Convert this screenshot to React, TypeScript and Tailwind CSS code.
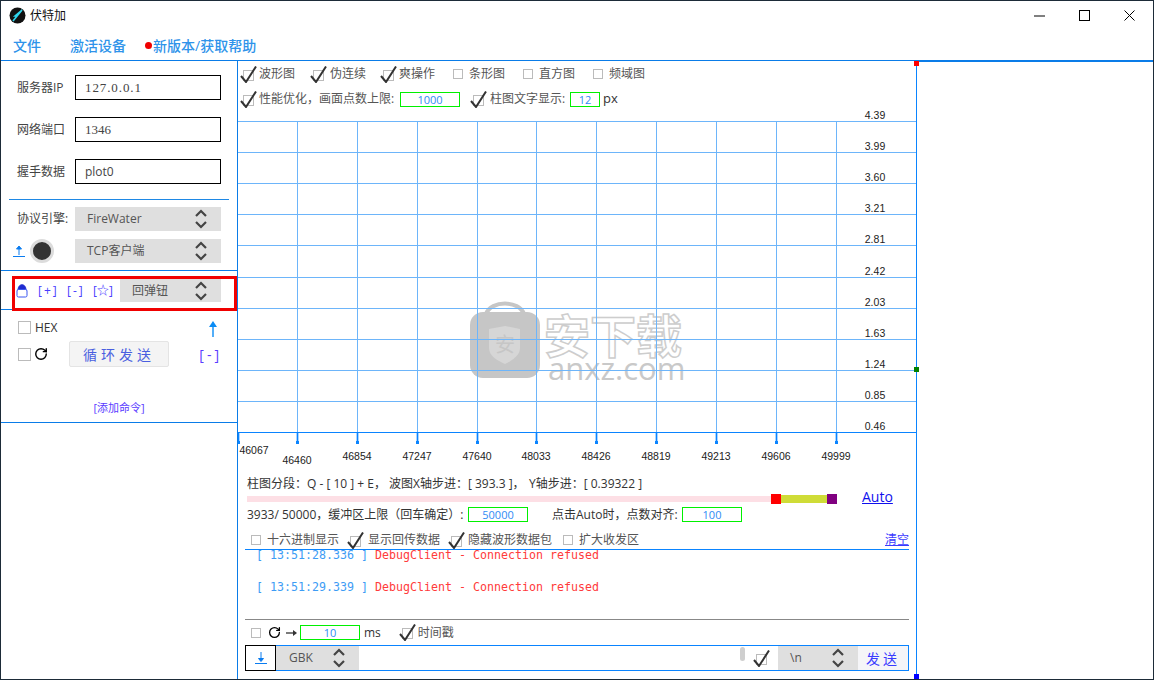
import { RotateCw } from "lucide-react"

const sans = "font-['Open_Sans','Noto_Sans_CJK_SC',sans-serif]"

const xTicks = [
  { x: 238, y: 454, t: "46067", lx: 254 },
  { x: 297, y: 464, t: "46460", lx: 297 },
  { x: 357, y: 460, t: "46854", lx: 357 },
  { x: 417, y: 460, t: "47247", lx: 417 },
  { x: 477, y: 460, t: "47640", lx: 477 },
  { x: 536, y: 460, t: "48033", lx: 536 },
  { x: 596, y: 460, t: "48426", lx: 596 },
  { x: 656, y: 460, t: "48819", lx: 656 },
  { x: 716, y: 460, t: "49213", lx: 716 },
  { x: 776, y: 460, t: "49606", lx: 776 },
  { x: 836, y: 460, t: "49999", lx: 836 },
]
const yTicks = [
  { y: 121, t: "4.39" },
  { y: 152, t: "3.99" },
  { y: 183, t: "3.60" },
  { y: 214, t: "3.21" },
  { y: 245, t: "2.81" },
  { y: 277, t: "2.42" },
  { y: 308, t: "2.03" },
  { y: 339, t: "1.63" },
  { y: 370, t: "1.24" },
  { y: 401, t: "0.85" },
  { y: 432, t: "0.46" },
]

function Chevrons() {
  return (
    <svg width="14" height="22" viewBox="0 0 14 22" fill="none" stroke="#444" strokeWidth="2.2">
      <path d="M2 8 L7 3 L12 8" />
      <path d="M2 14 L7 19 L12 14" />
    </svg>
  )
}

function Select({ label, w, pl = 12 }: { label: string; w: string; pl?: number }) {
  return (
    <div className={`${w} h-full bg-[#dfdfdf] flex items-center justify-between pr-[13px] text-[12px] text-[#555]`}>
      <span style={{ paddingLeft: pl }}>{label}</span>
      <Chevrons />
    </div>
  )
}

function Tick() {
  return (
    <svg width="18" height="17" viewBox="0 0 18 17" fill="none" className="shrink-0">
      <rect x="3.5" y="4.5" width="10" height="10" stroke="#bbb" />
      <path d="M1 10 L6 16 L16 0.5" stroke="#333" strokeWidth="2" />
    </svg>
  )
}

function Box({ size = "w-[10px] h-[10px]" }: { size?: string }) {
  return <div className={`${size} border border-[#bbb] bg-white shrink-0`} />
}

function UpArrow({ down = false }: { down?: boolean }) {
  return (
    <svg width="12" height="14" viewBox="0 0 12 14" fill="none" stroke="#0a7cf0" strokeWidth="1">
      {down ? <path d="M6 1 V9" /> : <path d="M6 3 V11" />}
      {down ? <path d="M3.5 7.5 L6 10.5 L8.5 7.5 Z" fill="#0a7cf0" /> : <path d="M3.5 5 L6 2 L8.5 5 Z" fill="#0a7cf0" />}
      <path d="M0 12.5 H12" />
    </svg>
  )
}

function GreenInput({ value, w }: { value: string; w: string }) {
  return (
    <div className={`${w} h-[15px] border border-[#00f000] flex items-center justify-center text-[11px] leading-none text-[#2f8bf5]`}>
      {value}
    </div>
  )
}

function Watermark() {
  return (
    <div className="absolute left-[231px] top-[190px] flex items-start">
      <svg width="72" height="82" viewBox="0 0 72 82" className="shrink-0">
        <path d="M17 16 C22 2 50 2 55 16" fill="none" stroke="#c6c6c6" strokeWidth="4" />
        <rect x="1" y="14" width="70" height="66" rx="13" fill="#c6c6c6" />
        <path d="M20 31 L36 28 L51 31 V50 C51 58 42 63 36 66 C29 63 20 58 20 50 Z" fill="#d6d6d6" />
        <text x="36" y="54" textAnchor="middle" fontSize="20" fill="#c6c6c6" fontFamily="Noto Sans CJK SC">安</text>
      </svg>
      <div className="ml-[3px] mt-[12px] flex flex-col">
        <span className="h-[46px] text-[46px] leading-[46px] font-bold text-white [-webkit-text-stroke:1.5px_#cdcdcd] font-['Noto_Sans_CJK_SC',sans-serif]">
          安下载
        </span>
        <span className="pl-[4px] h-[24px] text-[31px] leading-[24px] text-[#c9c9c9] font-['Open_Sans',sans-serif]">anxz.com</span>
      </div>
    </div>
  )
}

function Chart() {
  return (
    <div className="relative h-[362px] shrink-0">
      <Watermark />
      <svg width="678" height="362" viewBox="238 108 678 362" className="relative block">
        {yTicks.map((r) => (
          <line key={r.t} x1="238" x2="916" y1={r.y + 0.5} y2={r.y + 0.5} stroke={r.y === 432 ? "#0a84ff" : "#6db5fa"} />
        ))}
        {xTicks.slice(1).map((r) => (
          <line key={r.t} x1={r.x + 0.5} x2={r.x + 0.5} y1="121" y2="432" stroke="#6db5fa" />
        ))}
        {xTicks.map((r) => (
          <g key={r.t}>
            <line x1={r.x + 0.5} x2={r.x + 0.5} y1="433" y2="444" stroke="#0a84ff" strokeWidth="1.7" />
            <rect x={r.x - 1} y="441" width="3" height="3" fill="#0a84ff" />
            <text x={r.lx} y={r.y} textAnchor="middle" fontSize="10.5" fill="#222" fontFamily="Liberation Sans">
              {r.t}
            </text>
          </g>
        ))}
        {yTicks.map((r) => (
          <text key={r.t} x="875" y={r.y - 2} textAnchor="middle" fontSize="10.5" fill="#222" fontFamily="Liberation Sans">
            {r.t}
          </text>
        ))}
      </svg>
    </div>
  )
}

function Sidebar() {
  const fields = [
    { label: "服务器IP", value: "127.0.0.1", cls: "font-['Liberation_Serif',serif] text-[13px] tracking-[0.9px]" },
    { label: "网络端口", value: "1346", cls: "font-['Liberation_Serif',serif] text-[13px]" },
    { label: "握手数据", value: "plot0", cls: "" },
  ]
  return (
    <aside className="w-[237px] shrink-0 border-r border-[#0a7ce8] flex flex-col text-[12px] text-[#444]">
      <div className="pt-[14px] pl-4 flex flex-col gap-[17px]">
        {fields.map((f) => (
          <div key={f.label} className="flex items-center h-[25px]">
            <span className="w-[58px]">{f.label}</span>
            <div className={`w-[146px] h-full border border-black flex items-center pl-[9px] text-[#444] ${f.cls}`}>{f.value}</div>
          </div>
        ))}
      </div>
      <div className="mt-[15px] ml-2 w-[220px] h-px bg-[#1e88e5]" />
      <div className="mt-[7px] pl-4 flex flex-col gap-2">
        <div className="flex items-center h-6">
          <span className="w-[58px]">协议引擎:</span>
          <Select label="FireWater" w="w-[146px]" />
        </div>
        <div className="flex items-center h-6">
          <div className="w-[58px] flex items-center -ml-[4px] pr-0">
            <UpArrow />
            <div className="ml-[5px] w-[24px] h-[24px] rounded-full bg-[#333] border-[3px] border-[#dcdcdc]" />
          </div>
          <div className="ml-[4px]">
            <div className="h-6">
              <Select label="TCP客户端" w="w-[146px]" />
            </div>
          </div>
        </div>
      </div>
      <div className="mt-[7px] h-px bg-[#0a7ce8]" />
      <div className="relative mt-[5px] ml-[11px] w-[225px] h-[35px] border-[3px] border-[#f00000] flex items-start">
        <div className="absolute -left-[14px] top-[30px] w-[11px] h-px bg-[#0a7ce8]" />
        <div className="h-[23px] flex items-center text-[12px] text-[#4a3cff] w-full">
          <svg width="12" height="15" viewBox="0 0 12 15" className="ml-[1px] shrink-0">
            <path d="M2 7 C2 0 10 0 10 7 Z" fill="#1f2bd0" stroke="#1f2bd0" />
            <rect x="1" y="6.5" width="10" height="7.5" rx="1.5" fill="#fff" stroke="#3b57f0" />
          </svg>
          <span className="ml-[10px] w-[29px] tracking-[2px]">[+]</span>
          <span className="w-[26px] tracking-[2px]">[-]</span>
          <span className="w-[27px]">[☆]</span>
          <Select label="回弹钮" w="w-[101px]" />
        </div>
      </div>
      <div className="mt-[10px] pl-[17px] pr-[19px] flex items-center h-[13px] justify-between">
        <div className="flex items-center gap-[4px]">
          <Box size="w-[13px] h-[13px]" />
          <span className="text-[#333]">HEX</span>
        </div>
        <svg width="10" height="17" viewBox="0 0 10 17" className="mt-[2px]">
          <path d="M5 4 V17" stroke="#0a8cf5" strokeWidth="1.4" />
          <path d="M1 7 L5 1 L9 7 Z" fill="#0a8cf5" />
        </svg>
      </div>
      <div className="mt-[7px] pl-[17px] pr-[15px] flex items-center h-[26px]">
        <Box size="w-[13px] h-[13px]" />
        <RotateCw size={14} strokeWidth={2.4} color="#000" className="ml-[3px]" />
        <div className="ml-[21px] w-[100px] h-[26px] bg-[#f4f4f4] border border-[#e4e4e4] rounded-[2px] flex items-center justify-center text-[14px] tracking-[4px] text-[#4a5fe0]">
          循环发送
        </div>
        <span className="ml-auto text-[14px] tracking-[3px] text-[#5a3cff]">[-]</span>
      </div>
      <div className="mt-[33px] h-[15px] text-center text-[11px] leading-[15px] text-[#5a3cff]">[添加命令]</div>
      <div className="mt-[7px] h-px bg-[#0a7ce8]" />
    </aside>
  )
}

function ChartOptions() {
  return (
    <div className="h-[47px] shrink-0 pt-[5px] pl-[2px] text-[12px] text-[#555]">
      <div className="flex items-center h-4">
        <Tick />
        <span className="ml-[1px] w-[51px]">波形图</span>
        <Tick />
        <span className="ml-[2px] w-[50px]">伪连续</span>
        <Tick />
        <span className="ml-[1px] w-[54px]">爽操作</span>
        <Box />
        <span className="ml-[6px] w-[54px]">条形图</span>
        <Box />
        <span className="ml-[6px] w-[54px]">直方图</span>
        <Box />
        <span className="ml-[6px]">频域图</span>
      </div>
      <div className="mt-[9px] flex items-center h-4">
        <Tick />
        <span className="ml-[1px] w-[141px] whitespace-nowrap">性能优化，画面点数上限:</span>
        <GreenInput value="1000" w="w-[60px]" />
        <div className="ml-[10px]">
          <Tick />
        </div>
        <span className="ml-[2px] w-[80px] whitespace-nowrap">柱图文字显示:</span>
        <GreenInput value="12" w="w-[30px]" />
        <span className="ml-[3px] text-[13px] text-[#333]">px</span>
      </div>
    </div>
  )
}

function SliderPanel() {
  return (
    <div className="pl-[9px] text-[12px] text-[#333]">
      <div className="mt-[6px] h-4 leading-4 whitespace-nowrap flex">
        <span className="w-[142px]">柱图分段：Q - [ 10 ] + E，</span>
        <span className="w-[140px]">波图X轴步进：[ 393.3 ]，</span>
        <span>Y轴步进：[ 0.39322 ]</span>
      </div>
      <div className="mt-[2px] h-[10px] flex items-center">
        <div className="w-[524px] h-[6px] bg-[#fddfe5]" />
        <div className="w-[10px] h-[10px] bg-[#ff0000]" />
        <div className="w-[46px] h-2 bg-[#cfdc37]" />
        <div className="w-[10px] h-[10px] bg-[#800080]" />
        <a className="ml-[25px] -mt-[4px] text-[14px] leading-[20px] underline text-[#1010ee]">Auto</a>
      </div>
      <div className="mt-[3px] h-[15px] flex items-center">
        <span className="w-[221px] whitespace-nowrap">3933/ 50000，缓冲区上限（回车确定）:</span>
        <GreenInput value="50000" w="w-[60px]" />
        <span className="ml-[24px] w-[130px] whitespace-nowrap">点击Auto时，点数对齐:</span>
        <GreenInput value="100" w="w-[60px]" />
      </div>
    </div>
  )
}

function LogPanel() {
  return (
    <div className="ml-[7px] w-[664px] flex flex-col text-[12px] text-[#555]">
      <div className="mt-[10px] h-4 flex items-center pl-[6px]">
        <Box />
        <span className="ml-[6px] w-[81px] whitespace-nowrap">十六进制显示</span>
        <div className="-ml-[1px]">
          <Tick />
        </div>
        <span className="ml-[3px] w-[80px] whitespace-nowrap">显示回传数据</span>
        <Tick />
        <span className="ml-[2px] w-[95px] whitespace-nowrap">隐藏波形数据包</span>
        <Box />
        <span className="ml-[6px] whitespace-nowrap">扩大收发区</span>
        <a className="ml-auto underline text-[#3b3bff]">清空</a>
      </div>
      <div className="mt-px h-px bg-[#0a84ff]" />
      <div className="h-[69px] overflow-hidden pl-[11px] text-[11.63px] font-['DejaVu_Sans_Mono',monospace] leading-4">
        <div className="-mt-[3px] whitespace-pre">
          <span className="text-[#3d9cf5]">[ 13:51:28.336 ] </span>
          <span className="text-[#ff3b3b]">DebugClient - Connection refused</span>
        </div>
        <div className="mt-4 whitespace-pre">
          <span className="text-[#3d9cf5]">[ 13:51:29.339 ] </span>
          <span className="text-[#ff3b3b]">DebugClient - Connection refused</span>
        </div>
      </div>
      <div className="h-px bg-[#888]" />
      <div className="h-[25px] flex items-center pl-[6px]">
        <Box />
        <RotateCw size={13} strokeWidth={2.4} color="#000" className="ml-[7px]" />
        <svg width="11" height="8" viewBox="0 0 11 8" className="ml-[5px] mr-[3px]">
          <path d="M0 4 H8" stroke="#333" strokeWidth="1.3" />
          <path d="M7 1 L11 4 L7 7 Z" fill="#333" />
        </svg>
        <GreenInput value="10" w="w-[60px]" />
        <span className="ml-[4px] text-[#333]">ms</span>
        <div className="ml-[18px]">
          <Tick />
        </div>
        <span className="ml-[1px]">时间戳</span>
      </div>
      <div className="h-[26px] border border-[#0a84ff] flex items-stretch">
        <div className="-ml-px -mt-px h-[26px] w-[31px] border border-black flex items-center justify-center">
          <UpArrow down />
        </div>
        <Select label="GBK" w="w-[83px]" pl={13} />
        <div className="flex-1 flex items-center justify-end pr-[7px]">
          <div className="w-[5px] h-[14px] mb-[9px] rounded-full bg-[#cfcfcf]" />
          <div className="ml-[8px]">
            <Tick />
          </div>
        </div>
        <Select label="\n" w="w-[80px]" pl={12} />
        <div className="w-[50px] bg-[#f5f5f8] flex items-center justify-center text-[14px] tracking-[3px] text-[#3a3cff]">发送</div>
      </div>
    </div>
  )
}

export default function App() {
  return (
    <div className={`relative w-[1154px] h-[680px] bg-white border-t border-l border-r border-b border-[#1d2b38] flex flex-col overflow-hidden ${sans}`}>
      <div className="h-[29px] shrink-0 flex items-center pl-[8px]">
        <svg width="17" height="17" viewBox="0 0 17 17">
          <circle cx="8.5" cy="8.5" r="8" fill="#111" />
          <path d="M13 3 L4 14 L8 9 L6 9 Z" stroke="#2fd6ee" strokeWidth="1.6" fill="none" />
        </svg>
        <span className="ml-[4px] text-[12px] text-[#111]">伏特加</span>
        <div className="ml-auto flex items-center">
          <svg width="11" height="2" viewBox="0 0 11 2" className="mr-[34px]">
            <path d="M0 1 H11" stroke="#000" strokeWidth="1" />
          </svg>
          <div className="w-[11px] h-[11px] border border-black mr-[34px]" />
          <svg width="11" height="11" viewBox="0 0 11 11" className="mr-[18px]">
            <path d="M0.5 0.5 L10.5 10.5 M10.5 0.5 L0.5 10.5" stroke="#000" strokeWidth="1" />
          </svg>
        </div>
      </div>
      <nav className="h-[31px] shrink-0 border-b border-[#0a7ce8] flex items-center pl-[12px] text-[14px] font-medium text-[#2e93ea]">
        <span className="w-[57px]">文件</span>
        <span className="w-[75px]">激活设备</span>
        <span className="w-[7px] h-[7px] rounded-full bg-[#f00000]" />
        <span className="ml-[1px]">新版本/获取帮助</span>
      </nav>
      <main className="flex-1 flex min-h-0">
        <Sidebar />
        <section className="relative w-[679px] shrink-0 border-r border-[#0a84ff] flex flex-col">
          <ChartOptions />
          <Chart />
          <SliderPanel />
          <LogPanel />
          <div className="absolute -right-[3px] top-0 w-[5px] h-[5px] bg-[#ff0000]" />
          <div className="absolute -right-[3px] top-[306px] w-[5px] h-[5px] bg-[#008000]" />
          <div className="absolute -right-[3px] bottom-0 w-[5px] h-[5px] bg-[#0000ff]" />
        </section>
        <div className="flex-1 border-t border-[#0a7ce8]" />
      </main>
    </div>
  )
}
